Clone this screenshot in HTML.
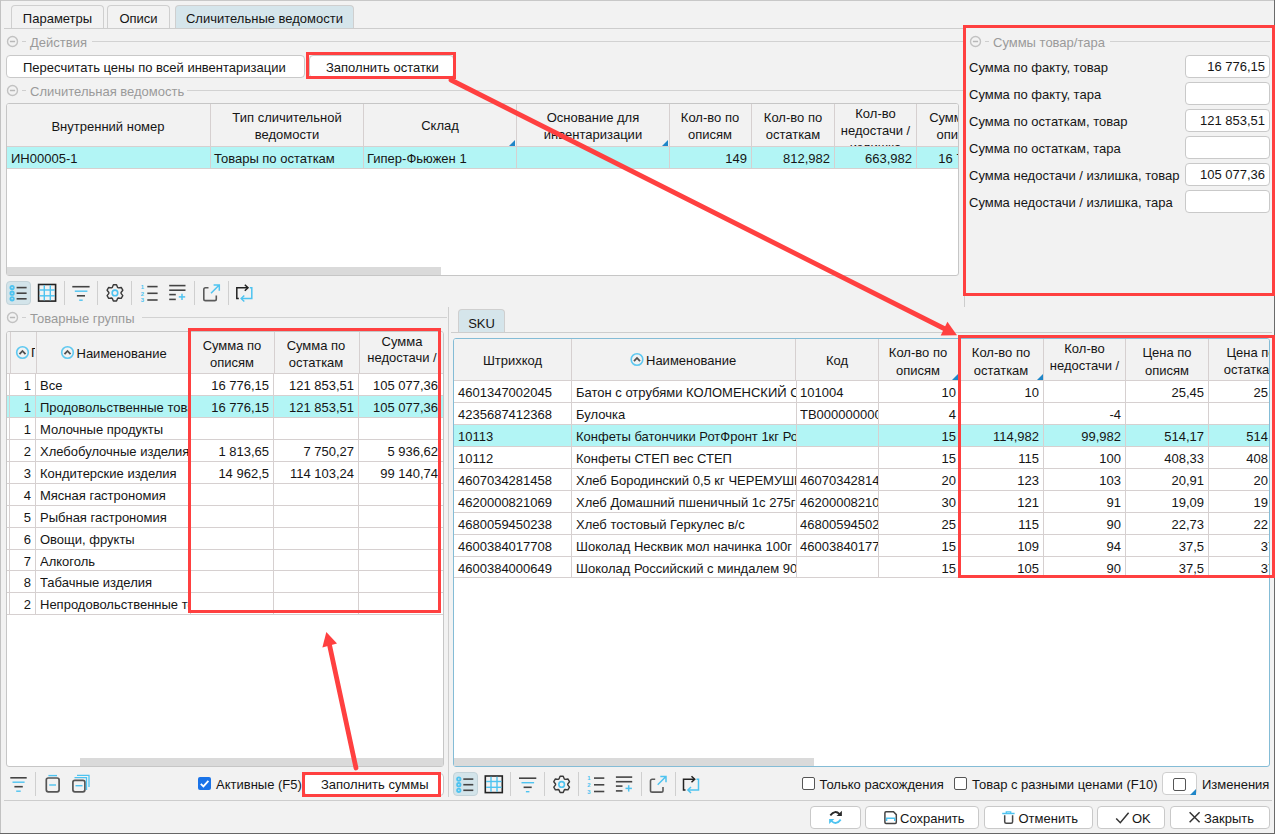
<!DOCTYPE html><html><head><meta charset="utf-8"><style>
*{box-sizing:border-box}
html,body{margin:0;padding:0}
body{width:1275px;height:834px;overflow:hidden;position:relative;background:#f2f2f2;font-family:"Liberation Sans",sans-serif;font-size:13px;color:#151515}
.a{position:absolute}
.t{position:absolute;white-space:nowrap;line-height:16px}
.c{position:absolute;white-space:nowrap;overflow:hidden;line-height:16px}
.btn{position:absolute;background:#fff;border:1px solid #c9c9c9;border-radius:4px}
.tab{position:absolute;border:1px solid #cfcfcf;border-bottom:none;border-radius:4px 4px 0 0;text-align:center;line-height:22px;padding-top:2px}
.grp{position:absolute;color:#9a9a9a;white-space:nowrap;line-height:16px}
.hl{position:absolute;height:1px;background:#cdcdcd}
.vl{position:absolute;width:1px}
.inp{position:absolute;background:#fff;border:1px solid #c9c9c9;border-radius:4px;text-align:right;padding-right:4px;line-height:22px}
.sep{position:absolute;width:1px;background:#cfcfcf}
.cb{position:absolute;width:13px;height:13px;border:1px solid #555;border-radius:2px;background:#fff}
</style></head><body><div class="a" style="left:0px;top:0px;width:1275px;height:1px;background:#c8c8c8"></div>
<div class="a" style="left:0px;top:0px;width:1px;height:834px;background:#c2c2c2"></div>
<div class="a" style="left:1274px;top:0px;width:1px;height:834px;background:#6a6a6a"></div>
<div class="a" style="left:0px;top:833px;width:1275px;height:1px;background:#666666"></div>
<div class="tab" style="left:11px;top:5px;width:93px;height:23px;background:#f2f2f2">Параметры</div>
<div class="tab" style="left:107px;top:5px;width:63px;height:23px;background:#f2f2f2">Описи</div>
<div class="tab" style="left:175px;top:5px;width:179px;height:23px;background:#d5e5eb">Сличительные ведомости</div>
<div class="a" style="left:4px;top:28px;width:960px;height:1px;background:#cdcdcd"></div>
<svg class="a" style="left:0;top:0;overflow:visible" width="1" height="1"><g transform="translate(6.5,35.5)"><circle cx="6" cy="6" r="5" fill="none" stroke="#c2c2c2" stroke-width="1.4"/><line x1="3.4" y1="6" x2="8.6" y2="6" stroke="#b8b8b8" stroke-width="1.5"/></g></svg>
<div class="a" style="left:22px;top:41px;width:4px;height:1px;background:#cfcfcf"></div>
<div class="grp" style="left:30px;top:35px">Действия</div>
<div class="a" style="left:92px;top:41px;width:871px;height:1px;background:#d2d2d2"></div>
<div class="btn" style="left:6px;top:55px;width:299px;height:23px"></div>
<div class="t" style="left:23px;top:60px;">Пересчитать цены по всей инвентаризации</div>
<div class="btn" style="left:309px;top:55px;width:145px;height:23px"></div>
<div class="t" style="left:326px;top:60px;">Заполнить остатки</div>
<svg class="a" style="left:0;top:0;overflow:visible" width="1" height="1"><g transform="translate(6.5,84.5)"><circle cx="6" cy="6" r="5" fill="none" stroke="#c2c2c2" stroke-width="1.4"/><line x1="3.4" y1="6" x2="8.6" y2="6" stroke="#b8b8b8" stroke-width="1.5"/></g></svg>
<div class="a" style="left:22px;top:90px;width:4px;height:1px;background:#cfcfcf"></div>
<div class="grp" style="left:30px;top:84px">Сличительная ведомость</div>
<div class="a" style="left:187px;top:90px;width:776px;height:1px;background:#d2d2d2"></div>
<div class="a" style="left:6px;top:103px;width:953px;height:173px;border:1px solid #c6c6c6;border-radius:3px;background:#fff"></div>
<div class="a" style="left:7px;top:104px;width:951px;height:42px;background:#f2f2f2;border-radius:2px 2px 0 0"></div>
<div class="a" style="left:7px;top:147px;width:951px;height:21px;background:#b2f5f5"></div>
<div class="a" style="left:7px;top:146px;width:951px;height:1px;background:#d6d0d0"></div>
<div class="a" style="left:7px;top:168px;width:951px;height:1px;background:#d6d0d0"></div>
<div class="a" style="left:210px;top:104px;width:1px;height:64px;background:#d6d0d0"></div>
<div class="a" style="left:363px;top:104px;width:1px;height:64px;background:#d6d0d0"></div>
<div class="a" style="left:516px;top:104px;width:1px;height:64px;background:#d6d0d0"></div>
<div class="a" style="left:669px;top:104px;width:1px;height:64px;background:#d6d0d0"></div>
<div class="a" style="left:751px;top:104px;width:1px;height:64px;background:#d6d0d0"></div>
<div class="a" style="left:834px;top:104px;width:1px;height:64px;background:#d6d0d0"></div>
<div class="a" style="left:916px;top:104px;width:1px;height:64px;background:#d6d0d0"></div>
<div class="a" style="left:7px;top:267px;width:434px;height:8px;background:#dadada"></div>
<div class="t" style="left:-42px;width:300px;text-align:center;top:119px;">Внутренний номер</div>
<div class="t" style="left:137px;width:300px;text-align:center;top:110px;">Тип сличительной</div>
<div class="t" style="left:137px;width:300px;text-align:center;top:127px;">ведомости</div>
<div class="t" style="left:290px;width:300px;text-align:center;top:118px;">Склад</div>
<svg class="a" style="left:509px;top:140px" width="6" height="6"><polygon points="6,0 6,6 0,6" fill="#1f86c8"/></svg>
<div class="t" style="left:443px;width:300px;text-align:center;top:110px;">Основание для</div>
<div class="t" style="left:443px;width:300px;text-align:center;top:127px;">инвентаризации</div>
<svg class="a" style="left:662px;top:140px" width="6" height="6"><polygon points="6,0 6,6 0,6" fill="#1f86c8"/></svg>
<div class="t" style="left:560px;width:300px;text-align:center;top:110px;">Кол-во по</div>
<div class="t" style="left:560px;width:300px;text-align:center;top:127px;">описям</div>
<div class="t" style="left:643px;width:300px;text-align:center;top:110px;">Кол-во по</div>
<div class="t" style="left:643px;width:300px;text-align:center;top:127px;">остаткам</div>
<div class="c" style="left:835px;top:104px;width:81px;height:42px"><div style="position:absolute;left:0;width:81px;text-align:center;top:1px;line-height:17px">Кол-во<br>недостачи /<br>излишка</div></div>
<div class="c" style="left:917px;top:104px;width:41px;height:42px"><div style="position:absolute;left:0;width:83px;text-align:center;top:5px;line-height:17px">Сумма по<br>описям</div></div>
<div class="t" style="left:11px;top:150.5px;">ИН00005-1</div>
<div class="t" style="left:214px;top:150.5px;">Товары по остаткам</div>
<div class="t" style="left:367px;top:150.5px;">Гипер-Фьюжен 1</div>
<div class="t" style="right:528px;top:150.5px;">149</div>
<div class="t" style="right:445px;top:150.5px;">812,982</div>
<div class="t" style="right:363px;top:150.5px;">663,982</div>
<div class="c" style="left:917px;top:147px;width:41px;height:21px"><div style="position:absolute;right:-38px;top:3.5px">16 776,15</div></div>
<div class="a" style="left:964px;top:28px;width:1px;height:279px;background:#cdcdcd"></div>
<svg class="a" style="left:0;top:0;overflow:visible" width="1" height="1"><g transform="translate(969.5,35.5)"><circle cx="6" cy="6" r="5" fill="none" stroke="#c2c2c2" stroke-width="1.4"/><line x1="3.4" y1="6" x2="8.6" y2="6" stroke="#b8b8b8" stroke-width="1.5"/></g></svg>
<div class="a" style="left:985px;top:41px;width:4px;height:1px;background:#cfcfcf"></div>
<div class="grp" style="left:993px;top:35px">Суммы товар/тара</div>
<div class="a" style="left:1110px;top:41px;width:160px;height:1px;background:#d2d2d2"></div>
<div class="t" style="left:969px;top:59.5px;">Сумма по факту, товар</div>
<div class="inp" style="left:1185px;top:55px;width:85px;height:23px">16 776,15</div>
<div class="t" style="left:969px;top:86.5px;">Сумма по факту, тара</div>
<div class="inp" style="left:1185px;top:82px;width:85px;height:23px"></div>
<div class="t" style="left:969px;top:113.5px;">Сумма по остаткам, товар</div>
<div class="inp" style="left:1185px;top:109px;width:85px;height:23px">121 853,51</div>
<div class="t" style="left:969px;top:140.5px;">Сумма по остаткам, тара</div>
<div class="inp" style="left:1185px;top:136px;width:85px;height:23px"></div>
<div class="t" style="left:969px;top:167.5px;">Сумма недостачи / излишка, товар</div>
<div class="inp" style="left:1185px;top:163px;width:85px;height:23px">105 077,36</div>
<div class="t" style="left:969px;top:194.5px;">Сумма недостачи / излишка, тара</div>
<div class="inp" style="left:1185px;top:190px;width:85px;height:23px"></div>
<div class="a" style="left:6px;top:281px;width:25px;height:24px;background:#d3e4ea;border:1px solid #c3d3d9;border-radius:4px"></div>
<svg class="a" style="left:0;top:0;overflow:visible" width="1" height="1"><g transform="translate(0,0)"><circle cx="12.1" cy="287.6" r="1.7" fill="none" stroke="#4ec3f0" stroke-width="1.8"/><line x1="16.6" y1="287.6" x2="26.6" y2="287.6" stroke="#444" stroke-width="1.6"/><circle cx="12.1" cy="293.2" r="1.7" fill="none" stroke="#4ec3f0" stroke-width="1.8"/><line x1="16.6" y1="293.2" x2="26.6" y2="293.2" stroke="#444" stroke-width="1.6"/><circle cx="12.1" cy="298.8" r="1.7" fill="none" stroke="#4ec3f0" stroke-width="1.8"/><line x1="16.6" y1="298.8" x2="26.6" y2="298.8" stroke="#444" stroke-width="1.6"/><rect x="38.6" y="284.5" width="17" height="16.6" fill="none" stroke="#222" stroke-width="1.6"/><line x1="44.3" y1="285.3" x2="44.3" y2="300.3" stroke="#4ec3f0" stroke-width="1.4"/><line x1="50.3" y1="285.3" x2="50.3" y2="300.3" stroke="#4ec3f0" stroke-width="1.4"/><line x1="39.4" y1="290" x2="54.8" y2="290" stroke="#4ec3f0" stroke-width="1.4"/><line x1="39.4" y1="295.8" x2="54.8" y2="295.8" stroke="#4ec3f0" stroke-width="1.4"/></g></svg>
<div class="a" style="left:64px;top:281px;width:1px;height:24px;background:#cfcfcf"></div>
<div class="a" style="left:97px;top:281px;width:1px;height:24px;background:#cfcfcf"></div>
<div class="a" style="left:131px;top:281px;width:1px;height:24px;background:#cfcfcf"></div>
<div class="a" style="left:194px;top:281px;width:1px;height:24px;background:#cfcfcf"></div>
<div class="a" style="left:228px;top:281px;width:1px;height:24px;background:#cfcfcf"></div>
<svg class="a" style="left:0;top:0;overflow:visible" width="1" height="1"><g transform="translate(0,0)"><line x1="72.3" y1="286.7" x2="89.6" y2="286.7" stroke="#444" stroke-width="1.6"/><line x1="74.8" y1="291.2" x2="87.4" y2="291.2" stroke="#4ec3f0" stroke-width="1.4"/><line x1="76.9" y1="295.8" x2="85" y2="295.8" stroke="#444" stroke-width="1.6"/><line x1="79.2" y1="300.2" x2="82.7" y2="300.2" stroke="#4ec3f0" stroke-width="1.4"/><polygon points="113.37,284.75 116.53,284.75 117.62,287.42 118.36,287.84 121.21,287.45 122.80,290.20 121.04,292.47 121.04,293.33 122.80,295.60 121.21,298.35 118.36,297.96 117.62,298.38 116.53,301.05 113.37,301.05 112.28,298.38 111.54,297.96 108.69,298.35 107.10,295.60 108.86,293.33 108.86,292.47 107.10,290.20 108.69,287.45 111.54,287.84 112.28,287.42" fill="none" stroke="#3a3a3a" stroke-width="1.4" stroke-linejoin="round"/><circle cx="114.95" cy="292.9" r="2.8" fill="none" stroke="#4ec3f0" stroke-width="1.6"/><text x="142.3" y="288.8" font-size="6" font-family="Liberation Sans" font-weight="bold" fill="#4ec3f0" text-anchor="middle">1</text><line x1="147.3" y1="286.6" x2="157.6" y2="286.6" stroke="#444" stroke-width="1.6"/><text x="142.3" y="295.5" font-size="6" font-family="Liberation Sans" font-weight="bold" fill="#4ec3f0" text-anchor="middle">2</text><line x1="147.3" y1="293.3" x2="157.6" y2="293.3" stroke="#444" stroke-width="1.6"/><text x="142.3" y="302.2" font-size="6" font-family="Liberation Sans" font-weight="bold" fill="#4ec3f0" text-anchor="middle">3</text><line x1="147.3" y1="300.0" x2="157.6" y2="300.0" stroke="#444" stroke-width="1.6"/><line x1="169.2" y1="285.6" x2="185.5" y2="285.6" stroke="#444" stroke-width="1.6"/><line x1="169.2" y1="290.2" x2="185.5" y2="290.2" stroke="#444" stroke-width="1.6"/><line x1="169.2" y1="294.6" x2="175.8" y2="294.6" stroke="#444" stroke-width="1.6"/><line x1="169.2" y1="299.4" x2="175.8" y2="299.4" stroke="#444" stroke-width="1.6"/><line x1="178.8" y1="296.9" x2="185.2" y2="296.9" stroke="#4ec3f0" stroke-width="1.5"/><line x1="182" y1="293.7" x2="182" y2="300.1" stroke="#4ec3f0" stroke-width="1.5"/><path d="M208.5 287.8 H205.5 Q203.8 287.8 203.8 289.5 V298.9 Q203.8 300.6 205.5 300.6 H214.6 Q216.3 300.6 216.3 298.9 V295.5" fill="none" stroke="#5a5a5a" stroke-width="1.6"/><path d="M211 293.3 L219 285.3 M213.6 285.1 H219.3 V290.8" fill="none" stroke="#4ec3f0" stroke-width="1.5"/><path d="M238.8 298.5 H236.8 V287.8 H247.5" fill="none" stroke="#222" stroke-width="1.5"/><path d="M244.8 284.8 L248 287.8 L244.8 290.8" fill="none" stroke="#222" stroke-width="1.5"/><path d="M249.8 287.8 H251.8 V298.5 H241.5" fill="none" stroke="#4ec3f0" stroke-width="1.5"/><path d="M244.3 295.5 L241.2 298.5 L244.3 301.5" fill="none" stroke="#4ec3f0" stroke-width="1.5"/></g></svg>
<svg class="a" style="left:0;top:0;overflow:visible" width="1" height="1"><g transform="translate(6.5,311.5)"><circle cx="6" cy="6" r="5" fill="none" stroke="#c2c2c2" stroke-width="1.4"/><line x1="3.4" y1="6" x2="8.6" y2="6" stroke="#b8b8b8" stroke-width="1.5"/></g></svg>
<div class="a" style="left:22px;top:317px;width:4px;height:1px;background:#cfcfcf"></div>
<div class="grp" style="left:30px;top:311px">Товарные группы</div>
<div class="a" style="left:142px;top:317px;width:305px;height:1px;background:#d2d2d2"></div>
<div class="a" style="left:6px;top:331px;width:438px;height:436px;border:1px solid #c6c6c6;border-radius:3px;background:#fff"></div>
<div class="a" style="left:7px;top:332px;width:436px;height:41px;background:#f2f2f2;border-radius:2px 2px 0 0"></div>
<div class="a" style="left:7px;top:373px;width:436px;height:1px;background:#d6d0d0"></div>
<div class="a" style="left:7px;top:395.00px;width:436px;height:1px;background:#d6d0d0"></div>
<div class="t" style="right:1244px;top:377.5px;">1</div>
<div class="c" style="left:40px;top:377.50px;width:150px;height:16px">Все</div>
<div class="t" style="right:1006px;top:377.5px;">16 776,15</div>
<div class="t" style="right:921px;top:377.5px;">121 853,51</div>
<div class="c" style="left:360px;top:377.50px;width:82px;height:16px"><div style="position:absolute;right:4px">105 077,36</div></div>
<div class="a" style="left:7px;top:396px;width:436px;height:21px;background:#b2f5f5"></div>
<div class="a" style="left:7px;top:417.00px;width:436px;height:1px;background:#d6d0d0"></div>
<div class="t" style="right:1244px;top:399.5px;">1</div>
<div class="c" style="left:40px;top:399.50px;width:150px;height:16px">Продовольственные товары</div>
<div class="t" style="right:1006px;top:399.5px;">16 776,15</div>
<div class="t" style="right:921px;top:399.5px;">121 853,51</div>
<div class="c" style="left:360px;top:399.50px;width:82px;height:16px"><div style="position:absolute;right:4px">105 077,36</div></div>
<div class="a" style="left:7px;top:439.00px;width:436px;height:1px;background:#d6d0d0"></div>
<div class="t" style="right:1244px;top:421.5px;">1</div>
<div class="c" style="left:40px;top:421.50px;width:150px;height:16px">Молочные продукты</div>
<div class="t" style="right:1006px;top:421.5px;"></div>
<div class="t" style="right:921px;top:421.5px;"></div>
<div class="c" style="left:360px;top:421.50px;width:82px;height:16px"><div style="position:absolute;right:4px"></div></div>
<div class="a" style="left:7px;top:461.00px;width:436px;height:1px;background:#d6d0d0"></div>
<div class="t" style="right:1244px;top:443.5px;">2</div>
<div class="c" style="left:40px;top:443.50px;width:150px;height:16px">Хлебобулочные изделия</div>
<div class="t" style="right:1006px;top:443.5px;">1 813,65</div>
<div class="t" style="right:921px;top:443.5px;">7 750,27</div>
<div class="c" style="left:360px;top:443.50px;width:82px;height:16px"><div style="position:absolute;right:4px">5 936,62</div></div>
<div class="a" style="left:7px;top:483.00px;width:436px;height:1px;background:#d6d0d0"></div>
<div class="t" style="right:1244px;top:465.5px;">3</div>
<div class="c" style="left:40px;top:465.50px;width:150px;height:16px">Кондитерские изделия</div>
<div class="t" style="right:1006px;top:465.5px;">14 962,5</div>
<div class="t" style="right:921px;top:465.5px;">114 103,24</div>
<div class="c" style="left:360px;top:465.50px;width:82px;height:16px"><div style="position:absolute;right:4px">99 140,74</div></div>
<div class="a" style="left:7px;top:505.00px;width:436px;height:1px;background:#d6d0d0"></div>
<div class="t" style="right:1244px;top:487.5px;">4</div>
<div class="c" style="left:40px;top:487.50px;width:150px;height:16px">Мясная гастрономия</div>
<div class="t" style="right:1006px;top:487.5px;"></div>
<div class="t" style="right:921px;top:487.5px;"></div>
<div class="c" style="left:360px;top:487.50px;width:82px;height:16px"><div style="position:absolute;right:4px"></div></div>
<div class="a" style="left:7px;top:527.00px;width:436px;height:1px;background:#d6d0d0"></div>
<div class="t" style="right:1244px;top:509.5px;">5</div>
<div class="c" style="left:40px;top:509.50px;width:150px;height:16px">Рыбная гастрономия</div>
<div class="t" style="right:1006px;top:509.5px;"></div>
<div class="t" style="right:921px;top:509.5px;"></div>
<div class="c" style="left:360px;top:509.50px;width:82px;height:16px"><div style="position:absolute;right:4px"></div></div>
<div class="a" style="left:7px;top:549.00px;width:436px;height:1px;background:#d6d0d0"></div>
<div class="t" style="right:1244px;top:531.5px;">6</div>
<div class="c" style="left:40px;top:531.50px;width:150px;height:16px">Овощи, фрукты</div>
<div class="t" style="right:1006px;top:531.5px;"></div>
<div class="t" style="right:921px;top:531.5px;"></div>
<div class="c" style="left:360px;top:531.50px;width:82px;height:16px"><div style="position:absolute;right:4px"></div></div>
<div class="a" style="left:7px;top:570.00px;width:436px;height:1px;background:#d6d0d0"></div>
<div class="t" style="right:1244px;top:553.5px;">7</div>
<div class="c" style="left:40px;top:553.50px;width:150px;height:16px">Алкоголь</div>
<div class="t" style="right:1006px;top:553.5px;"></div>
<div class="t" style="right:921px;top:553.5px;"></div>
<div class="c" style="left:360px;top:553.50px;width:82px;height:16px"><div style="position:absolute;right:4px"></div></div>
<div class="a" style="left:7px;top:592.00px;width:436px;height:1px;background:#d6d0d0"></div>
<div class="t" style="right:1244px;top:574.5px;">8</div>
<div class="c" style="left:40px;top:574.50px;width:150px;height:16px">Табачные изделия</div>
<div class="t" style="right:1006px;top:574.5px;"></div>
<div class="t" style="right:921px;top:574.5px;"></div>
<div class="c" style="left:360px;top:574.50px;width:82px;height:16px"><div style="position:absolute;right:4px"></div></div>
<div class="a" style="left:7px;top:614.00px;width:436px;height:1px;background:#d6d0d0"></div>
<div class="t" style="right:1244px;top:596.5px;">2</div>
<div class="c" style="left:40px;top:596.50px;width:150px;height:16px">Непродовольственные товары</div>
<div class="t" style="right:1006px;top:596.5px;"></div>
<div class="t" style="right:921px;top:596.5px;"></div>
<div class="c" style="left:360px;top:596.50px;width:82px;height:16px"><div style="position:absolute;right:4px"></div></div>
<div class="a" style="left:10px;top:332px;width:1px;height:41px;background:#d6d0d0"></div>
<div class="a" style="left:36px;top:332px;width:1px;height:41px;background:#d6d0d0"></div>
<div class="a" style="left:190px;top:332px;width:1px;height:41px;background:#d6d0d0"></div>
<div class="a" style="left:274px;top:332px;width:1px;height:41px;background:#d6d0d0"></div>
<div class="a" style="left:359px;top:332px;width:1px;height:41px;background:#d6d0d0"></div>
<div class="a" style="left:9px;top:373px;width:1px;height:241.00px;background:#d6d0d0"></div>
<div class="a" style="left:35px;top:373px;width:1px;height:241.00px;background:#d6d0d0"></div>
<div class="a" style="left:190px;top:373px;width:1px;height:241.00px;background:#d6d0d0"></div>
<div class="a" style="left:273px;top:373px;width:1px;height:241.00px;background:#d6d0d0"></div>
<div class="a" style="left:358px;top:373px;width:1px;height:241.00px;background:#d6d0d0"></div>
<svg class="a" style="left:0;top:0;overflow:visible" width="1" height="1"><g transform="translate(15.5,345.5)"><circle cx="7" cy="7" r="5.8" fill="none" stroke="#5ec8f0" stroke-width="1.6"/><path d="M4 8.7 L7 5.5 L10 8.7" fill="none" stroke="#505050" stroke-width="1.8"/></g></svg>
<div class="c" style="left:31px;top:345px;width:4px;height:16px">Г</div>
<svg class="a" style="left:0;top:0;overflow:visible" width="1" height="1"><g transform="translate(60.5,345.5)"><circle cx="7" cy="7" r="5.8" fill="none" stroke="#5ec8f0" stroke-width="1.6"/><path d="M4 8.7 L7 5.5 L10 8.7" fill="none" stroke="#505050" stroke-width="1.8"/></g></svg>
<div class="t" style="left:76.5px;top:345.5px;">Наименование</div>
<div class="t" style="left:82px;width:300px;text-align:center;top:338px;">Сумма по</div>
<div class="t" style="left:82px;width:300px;text-align:center;top:355px;">описям</div>
<div class="t" style="left:166px;width:300px;text-align:center;top:338px;">Сумма по</div>
<div class="t" style="left:166px;width:300px;text-align:center;top:355px;">остаткам</div>
<div class="c" style="left:360px;top:332px;width:82px;height:38px"><div style="position:absolute;left:0;width:84px;text-align:center;top:2px;line-height:16.4px">Сумма<br>недостачи /<br>излишка</div></div>
<div class="a" style="left:80px;top:758px;width:363px;height:8px;background:#dadada"></div>
<div class="a" style="left:448px;top:307px;width:1px;height:490px;background:#cfcfcf"></div>
<div class="tab" style="left:458px;top:309px;width:47px;height:24px;background:#d5e5eb;line-height:24px">SKU</div>
<div class="a" style="left:451px;top:332px;width:821px;height:1px;background:#cdcdcd"></div>
<div class="a" style="left:453px;top:338px;width:817px;height:429px;border:1px solid #84bcd6;border-radius:3px;background:#fff"></div>
<div class="a" style="left:454px;top:339px;width:815px;height:41px;background:#f2f2f2;border-radius:2px 2px 0 0"></div>
<div class="a" style="left:454px;top:380px;width:815px;height:1px;background:#d6d0d0"></div>
<div class="a" style="left:454px;top:402.00px;width:815px;height:1px;background:#d6d0d0"></div>
<div class="t" style="left:458px;top:384.5px;">4601347002045</div>
<div class="c" style="left:576px;top:384.50px;width:220px;height:16px">Батон с отрубями КОЛОМЕНСКИЙ С</div>
<div class="c" style="left:800px;top:384.50px;width:78px;height:16px">101004</div>
<div class="t" style="right:319px;top:384.5px;">10</div>
<div class="t" style="right:236px;top:384.5px;">10</div>
<div class="t" style="right:154px;top:384.5px;"></div>
<div class="t" style="right:71px;top:384.5px;">25,45</div>
<div class="c" style="left:1209px;top:384.50px;width:60px;height:16px"><div style="position:absolute;right:-17px">25,45</div></div>
<div class="a" style="left:454px;top:424.00px;width:815px;height:1px;background:#d6d0d0"></div>
<div class="t" style="left:458px;top:406.5px;">4235687412368</div>
<div class="c" style="left:576px;top:406.50px;width:220px;height:16px">Булочка</div>
<div class="c" style="left:800px;top:406.50px;width:78px;height:16px">ТВ000000000</div>
<div class="t" style="right:319px;top:406.5px;">4</div>
<div class="t" style="right:236px;top:406.5px;"></div>
<div class="t" style="right:154px;top:406.5px;">-4</div>
<div class="t" style="right:71px;top:406.5px;"></div>
<div class="c" style="left:1209px;top:406.50px;width:60px;height:16px"><div style="position:absolute;right:-17px"></div></div>
<div class="a" style="left:454px;top:425px;width:815px;height:21px;background:#b2f5f5"></div>
<div class="a" style="left:454px;top:446.00px;width:815px;height:1px;background:#d6d0d0"></div>
<div class="t" style="left:458px;top:428.5px;">10113</div>
<div class="c" style="left:576px;top:428.50px;width:220px;height:16px">Конфеты батончики РотФронт 1кг РотФронт</div>
<div class="c" style="left:800px;top:428.50px;width:78px;height:16px"></div>
<div class="t" style="right:319px;top:428.5px;">15</div>
<div class="t" style="right:236px;top:428.5px;">114,982</div>
<div class="t" style="right:154px;top:428.5px;">99,982</div>
<div class="t" style="right:71px;top:428.5px;">514,17</div>
<div class="c" style="left:1209px;top:428.50px;width:60px;height:16px"><div style="position:absolute;right:-17px">514,17</div></div>
<div class="a" style="left:454px;top:468.00px;width:815px;height:1px;background:#d6d0d0"></div>
<div class="t" style="left:458px;top:450.5px;">10112</div>
<div class="c" style="left:576px;top:450.50px;width:220px;height:16px">Конфеты СТЕП вес СТЕП</div>
<div class="c" style="left:800px;top:450.50px;width:78px;height:16px"></div>
<div class="t" style="right:319px;top:450.5px;">15</div>
<div class="t" style="right:236px;top:450.5px;">115</div>
<div class="t" style="right:154px;top:450.5px;">100</div>
<div class="t" style="right:71px;top:450.5px;">408,33</div>
<div class="c" style="left:1209px;top:450.50px;width:60px;height:16px"><div style="position:absolute;right:-17px">408,33</div></div>
<div class="a" style="left:454px;top:490.00px;width:815px;height:1px;background:#d6d0d0"></div>
<div class="t" style="left:458px;top:472.5px;">4607034281458</div>
<div class="c" style="left:576px;top:472.50px;width:220px;height:16px">Хлеб Бородинский 0,5 кг ЧЕРЕМУШКИ</div>
<div class="c" style="left:800px;top:472.50px;width:78px;height:16px">46070342814</div>
<div class="t" style="right:319px;top:472.5px;">20</div>
<div class="t" style="right:236px;top:472.5px;">123</div>
<div class="t" style="right:154px;top:472.5px;">103</div>
<div class="t" style="right:71px;top:472.5px;">20,91</div>
<div class="c" style="left:1209px;top:472.50px;width:60px;height:16px"><div style="position:absolute;right:-17px">20,91</div></div>
<div class="a" style="left:454px;top:512.00px;width:815px;height:1px;background:#d6d0d0"></div>
<div class="t" style="left:458px;top:494.5px;">4620000821069</div>
<div class="c" style="left:576px;top:494.50px;width:220px;height:16px">Хлеб Домашний пшеничный 1с 275г</div>
<div class="c" style="left:800px;top:494.50px;width:78px;height:16px">46200008210</div>
<div class="t" style="right:319px;top:494.5px;">30</div>
<div class="t" style="right:236px;top:494.5px;">121</div>
<div class="t" style="right:154px;top:494.5px;">91</div>
<div class="t" style="right:71px;top:494.5px;">19,09</div>
<div class="c" style="left:1209px;top:494.50px;width:60px;height:16px"><div style="position:absolute;right:-17px">19,09</div></div>
<div class="a" style="left:454px;top:534.00px;width:815px;height:1px;background:#d6d0d0"></div>
<div class="t" style="left:458px;top:516.5px;">4680059450238</div>
<div class="c" style="left:576px;top:516.50px;width:220px;height:16px">Хлеб тостовый Геркулес в/с</div>
<div class="c" style="left:800px;top:516.50px;width:78px;height:16px">46800594502</div>
<div class="t" style="right:319px;top:516.5px;">25</div>
<div class="t" style="right:236px;top:516.5px;">115</div>
<div class="t" style="right:154px;top:516.5px;">90</div>
<div class="t" style="right:71px;top:516.5px;">22,73</div>
<div class="c" style="left:1209px;top:516.50px;width:60px;height:16px"><div style="position:absolute;right:-17px">22,73</div></div>
<div class="a" style="left:454px;top:556.00px;width:815px;height:1px;background:#d6d0d0"></div>
<div class="t" style="left:458px;top:538.5px;">4600384017708</div>
<div class="c" style="left:576px;top:538.50px;width:220px;height:16px">Шоколад Несквик мол начинка 100г</div>
<div class="c" style="left:800px;top:538.50px;width:78px;height:16px">46003840177</div>
<div class="t" style="right:319px;top:538.5px;">15</div>
<div class="t" style="right:236px;top:538.5px;">109</div>
<div class="t" style="right:154px;top:538.5px;">94</div>
<div class="t" style="right:71px;top:538.5px;">37,5</div>
<div class="c" style="left:1209px;top:538.50px;width:60px;height:16px"><div style="position:absolute;right:-17px">37,5</div></div>
<div class="a" style="left:454px;top:577.00px;width:815px;height:1px;background:#d6d0d0"></div>
<div class="t" style="left:458px;top:560.5px;">4600384000649</div>
<div class="c" style="left:576px;top:560.50px;width:220px;height:16px">Шоколад Российский с миндалем 90г</div>
<div class="c" style="left:800px;top:560.50px;width:78px;height:16px"></div>
<div class="t" style="right:319px;top:560.5px;">15</div>
<div class="t" style="right:236px;top:560.5px;">105</div>
<div class="t" style="right:154px;top:560.5px;">90</div>
<div class="t" style="right:71px;top:560.5px;">37,5</div>
<div class="c" style="left:1209px;top:560.50px;width:60px;height:16px"><div style="position:absolute;right:-17px">37,5</div></div>
<div class="a" style="left:571px;top:339px;width:1px;height:41px;background:#d6d0d0"></div>
<div class="a" style="left:795px;top:339px;width:1px;height:41px;background:#d6d0d0"></div>
<div class="a" style="left:878px;top:339px;width:1px;height:41px;background:#d6d0d0"></div>
<div class="a" style="left:958px;top:339px;width:1px;height:41px;background:#d6d0d0"></div>
<div class="a" style="left:1043px;top:339px;width:1px;height:41px;background:#d6d0d0"></div>
<div class="a" style="left:1125px;top:339px;width:1px;height:41px;background:#d6d0d0"></div>
<div class="a" style="left:1208px;top:339px;width:1px;height:41px;background:#d6d0d0"></div>
<div class="a" style="left:571px;top:380px;width:1px;height:197.00px;background:#d6d0d0"></div>
<div class="a" style="left:796px;top:380px;width:1px;height:197.00px;background:#d6d0d0"></div>
<div class="a" style="left:878px;top:380px;width:1px;height:197.00px;background:#d6d0d0"></div>
<div class="a" style="left:958px;top:380px;width:1px;height:197.00px;background:#d6d0d0"></div>
<div class="a" style="left:1043px;top:380px;width:1px;height:197.00px;background:#d6d0d0"></div>
<div class="a" style="left:1125px;top:380px;width:1px;height:197.00px;background:#d6d0d0"></div>
<div class="a" style="left:1208px;top:380px;width:1px;height:197.00px;background:#d6d0d0"></div>
<div class="t" style="left:362.5px;width:300px;text-align:center;top:353px;">Штрихкод</div>
<svg class="a" style="left:0;top:0;overflow:visible" width="1" height="1"><g transform="translate(630,352.5)"><circle cx="7" cy="7" r="5.8" fill="none" stroke="#5ec8f0" stroke-width="1.6"/><path d="M4 8.7 L7 5.5 L10 8.7" fill="none" stroke="#505050" stroke-width="1.8"/></g></svg>
<div class="t" style="left:646px;top:353px;">Наименование</div>
<div class="t" style="left:687px;width:300px;text-align:center;top:353px;">Код</div>
<div class="t" style="left:768px;width:300px;text-align:center;top:345px;">Кол-во по</div>
<div class="t" style="left:768px;width:300px;text-align:center;top:362.5px;">описям</div>
<svg class="a" style="left:952px;top:374px" width="6" height="6"><polygon points="6,0 6,6 0,6" fill="#1f86c8"/></svg>
<div class="t" style="left:851px;width:300px;text-align:center;top:345px;">Кол-во по</div>
<div class="t" style="left:851px;width:300px;text-align:center;top:362.5px;">остаткам</div>
<svg class="a" style="left:1037px;top:374px" width="6" height="6"><polygon points="6,0 6,6 0,6" fill="#1f86c8"/></svg>
<div class="c" style="left:1044px;top:339px;width:81px;height:39px"><div style="position:absolute;left:0;width:81px;text-align:center;top:1px;line-height:17px">Кол-во<br>недостачи /<br>излишка</div></div>
<div class="t" style="left:1017px;width:300px;text-align:center;top:345px;">Цена по</div>
<div class="t" style="left:1017px;width:300px;text-align:center;top:362.5px;">описям</div>
<div class="c" style="left:1209px;top:339px;width:60px;height:42px"><div style="position:absolute;left:0;width:84px;text-align:center;top:5px;line-height:17px">Цена по<br>остаткам</div></div>
<div class="a" style="left:454px;top:758px;width:360px;height:8px;background:#dadada"></div>
<svg class="a" style="left:0;top:0;overflow:visible" width="1" height="1"><line x1="10.3" y1="777.8" x2="26.7" y2="777.8" stroke="#444" stroke-width="1.6"/><line x1="12.5" y1="782.2" x2="24.6" y2="782.2" stroke="#4ec3f0" stroke-width="1.4"/><line x1="14.4" y1="786.7" x2="22.8" y2="786.7" stroke="#444" stroke-width="1.6"/><line x1="16.2" y1="791.2" x2="20.7" y2="791.2" stroke="#4ec3f0" stroke-width="1.4"/><rect x="46.3" y="778" width="12.8" height="13.8" rx="2" fill="none" stroke="#555" stroke-width="1.7"/><line x1="48.4" y1="775.6" x2="57" y2="775.6" stroke="#4ec3f0" stroke-width="1.4"/><line x1="49.2" y1="785" x2="56" y2="785" stroke="#4ec3f0" stroke-width="1.4"/><rect x="72.9" y="780.3" width="12" height="11.5" rx="2" fill="none" stroke="#555" stroke-width="1.7"/><path d="M74.5 777.6 H86.5 V790" fill="none" stroke="#4ec3f0" stroke-width="1.3"/><path d="M77 775.3 H89 V787" fill="none" stroke="#4ec3f0" stroke-width="1.3"/><line x1="75.5" y1="785.7" x2="82.5" y2="785.7" stroke="#4ec3f0" stroke-width="1.4"/></svg>
<div class="a" style="left:35px;top:772px;width:1px;height:24px;background:#cfcfcf"></div>
<svg class="a" style="left:198px;top:777px" width="14" height="14" viewBox="0 0 14 14"><rect x="0" y="0" width="13" height="13" rx="2" fill="#1a73e8"/><path d="M2.8 6.8 L5.4 9.4 L10.4 3.8" fill="none" stroke="#fff" stroke-width="1.8"/></svg>
<div class="t" style="left:216px;top:777px;">Активные (F5)</div>
<div class="btn" style="left:304px;top:773px;width:140px;height:23px"></div>
<div class="t" style="left:321px;top:777px;">Заполнить суммы</div>
<div class="a" style="left:4px;top:800px;width:1268px;height:1px;background:#cdcdcd"></div>
<div class="a" style="left:453px;top:772px;width:25px;height:24px;background:#d3e4ea;border:1px solid #c3d3d9;border-radius:4px"></div>
<svg class="a" style="left:0;top:0;overflow:visible" width="1" height="1"><g transform="translate(446.7,491.5)"><circle cx="12.1" cy="287.6" r="1.7" fill="none" stroke="#4ec3f0" stroke-width="1.8"/><line x1="16.6" y1="287.6" x2="26.6" y2="287.6" stroke="#444" stroke-width="1.6"/><circle cx="12.1" cy="293.2" r="1.7" fill="none" stroke="#4ec3f0" stroke-width="1.8"/><line x1="16.6" y1="293.2" x2="26.6" y2="293.2" stroke="#444" stroke-width="1.6"/><circle cx="12.1" cy="298.8" r="1.7" fill="none" stroke="#4ec3f0" stroke-width="1.8"/><line x1="16.6" y1="298.8" x2="26.6" y2="298.8" stroke="#444" stroke-width="1.6"/><rect x="38.6" y="284.5" width="17" height="16.6" fill="none" stroke="#222" stroke-width="1.6"/><line x1="44.3" y1="285.3" x2="44.3" y2="300.3" stroke="#4ec3f0" stroke-width="1.4"/><line x1="50.3" y1="285.3" x2="50.3" y2="300.3" stroke="#4ec3f0" stroke-width="1.4"/><line x1="39.4" y1="290" x2="54.8" y2="290" stroke="#4ec3f0" stroke-width="1.4"/><line x1="39.4" y1="295.8" x2="54.8" y2="295.8" stroke="#4ec3f0" stroke-width="1.4"/></g></svg>
<div class="a" style="left:510px;top:772px;width:1px;height:24px;background:#cfcfcf"></div>
<div class="a" style="left:544px;top:772px;width:1px;height:24px;background:#cfcfcf"></div>
<div class="a" style="left:578px;top:772px;width:1px;height:24px;background:#cfcfcf"></div>
<div class="a" style="left:641px;top:772px;width:1px;height:24px;background:#cfcfcf"></div>
<div class="a" style="left:675px;top:772px;width:1px;height:24px;background:#cfcfcf"></div>
<svg class="a" style="left:0;top:0;overflow:visible" width="1" height="1"><g transform="translate(446.7,491.5)"><line x1="72.3" y1="286.7" x2="89.6" y2="286.7" stroke="#444" stroke-width="1.6"/><line x1="74.8" y1="291.2" x2="87.4" y2="291.2" stroke="#4ec3f0" stroke-width="1.4"/><line x1="76.9" y1="295.8" x2="85" y2="295.8" stroke="#444" stroke-width="1.6"/><line x1="79.2" y1="300.2" x2="82.7" y2="300.2" stroke="#4ec3f0" stroke-width="1.4"/><polygon points="113.37,284.75 116.53,284.75 117.62,287.42 118.36,287.84 121.21,287.45 122.80,290.20 121.04,292.47 121.04,293.33 122.80,295.60 121.21,298.35 118.36,297.96 117.62,298.38 116.53,301.05 113.37,301.05 112.28,298.38 111.54,297.96 108.69,298.35 107.10,295.60 108.86,293.33 108.86,292.47 107.10,290.20 108.69,287.45 111.54,287.84 112.28,287.42" fill="none" stroke="#3a3a3a" stroke-width="1.4" stroke-linejoin="round"/><circle cx="114.95" cy="292.9" r="2.8" fill="none" stroke="#4ec3f0" stroke-width="1.6"/><text x="142.3" y="288.8" font-size="6" font-family="Liberation Sans" font-weight="bold" fill="#4ec3f0" text-anchor="middle">1</text><line x1="147.3" y1="286.6" x2="157.6" y2="286.6" stroke="#444" stroke-width="1.6"/><text x="142.3" y="295.5" font-size="6" font-family="Liberation Sans" font-weight="bold" fill="#4ec3f0" text-anchor="middle">2</text><line x1="147.3" y1="293.3" x2="157.6" y2="293.3" stroke="#444" stroke-width="1.6"/><text x="142.3" y="302.2" font-size="6" font-family="Liberation Sans" font-weight="bold" fill="#4ec3f0" text-anchor="middle">3</text><line x1="147.3" y1="300.0" x2="157.6" y2="300.0" stroke="#444" stroke-width="1.6"/><line x1="169.2" y1="285.6" x2="185.5" y2="285.6" stroke="#444" stroke-width="1.6"/><line x1="169.2" y1="290.2" x2="185.5" y2="290.2" stroke="#444" stroke-width="1.6"/><line x1="169.2" y1="294.6" x2="175.8" y2="294.6" stroke="#444" stroke-width="1.6"/><line x1="169.2" y1="299.4" x2="175.8" y2="299.4" stroke="#444" stroke-width="1.6"/><line x1="178.8" y1="296.9" x2="185.2" y2="296.9" stroke="#4ec3f0" stroke-width="1.5"/><line x1="182" y1="293.7" x2="182" y2="300.1" stroke="#4ec3f0" stroke-width="1.5"/><path d="M208.5 287.8 H205.5 Q203.8 287.8 203.8 289.5 V298.9 Q203.8 300.6 205.5 300.6 H214.6 Q216.3 300.6 216.3 298.9 V295.5" fill="none" stroke="#5a5a5a" stroke-width="1.6"/><path d="M211 293.3 L219 285.3 M213.6 285.1 H219.3 V290.8" fill="none" stroke="#4ec3f0" stroke-width="1.5"/><path d="M238.8 298.5 H236.8 V287.8 H247.5" fill="none" stroke="#222" stroke-width="1.5"/><path d="M244.8 284.8 L248 287.8 L244.8 290.8" fill="none" stroke="#222" stroke-width="1.5"/><path d="M249.8 287.8 H251.8 V298.5 H241.5" fill="none" stroke="#4ec3f0" stroke-width="1.5"/><path d="M244.3 295.5 L241.2 298.5 L244.3 301.5" fill="none" stroke="#4ec3f0" stroke-width="1.5"/></g></svg>
<div class="cb" style="left:802px;top:777px"></div>
<div class="t" style="left:819.5px;top:777px;">Только расхождения</div>
<div class="cb" style="left:954px;top:777px"></div>
<div class="t" style="left:972px;top:777px;">Товар с разными ценами (F10)</div>
<div class="a" style="left:1162px;top:772px;width:35px;height:23px;background:#fff;border:1px solid #cfcfcf;border-radius:4px"></div>
<div class="cb" style="left:1173px;top:777.5px"></div>
<svg class="a" style="left:1190px;top:789px" width="6" height="6"><polygon points="6,0 6,6 0,6" fill="#1f86c8"/></svg>
<div class="t" style="left:1202px;top:777px;">Изменения</div>
<div class="btn" style="left:810px;top:806px;width:51px;height:23px"></div>
<div class="btn" style="left:865px;top:806px;width:114px;height:23px"></div>
<div class="btn" style="left:984px;top:806px;width:109px;height:23px"></div>
<div class="btn" style="left:1097px;top:806px;width:68px;height:23px"></div>
<div class="btn" style="left:1170px;top:806px;width:100px;height:23px"></div>
<svg class="a" style="left:0;top:0;overflow:visible" width="1" height="1"><path d="M830.3 815.4 Q835 809.3 839.6 814.2" fill="none" stroke="#2a2a2a" stroke-width="1.8"/><polygon points="841.9,810.8 841.9,815.9 836.6,815.9" fill="#2a2a2a"/><path d="M840.7 819.6 Q836 825.7 831.4 820.8" fill="none" stroke="#4ec3f0" stroke-width="1.8"/><polygon points="829.1,824 829.1,818.9 834.4,818.9" fill="#4ec3f0"/><path d="M886 811.8 H893.5 L896.3 814.6 V822.3 Q896.3 823.4 895.2 823.4 H886 Q884.9 823.4 884.9 822.3 V812.9 Q884.9 811.8 886 811.8 Z" fill="none" stroke="#444" stroke-width="1.5"/><path d="M886.6 821 V818.3 H894.7 V821" fill="none" stroke="#4ec3f0" stroke-width="1.4"/><line x1="1002.2" y1="813.5" x2="1014.6" y2="813.5" stroke="#4ec3f0" stroke-width="1.5"/><path d="M1006.3 813.2 V811.8 H1010.7 V813.2" fill="none" stroke="#4ec3f0" stroke-width="1.3"/><path d="M1004.7 815.3 V821.7 Q1004.7 823.2 1006.2 823.2 H1011.1 Q1012.6 823.2 1012.6 821.7 V815.3" fill="none" stroke="#484848" stroke-width="1.5"/><path d="M1116.2 818.5 L1120.3 822.7 L1128.6 812.8" fill="none" stroke="#333" stroke-width="1.5"/><path d="M1189.6 812.3 L1199.6 822.3 M1199.6 812.3 L1189.6 822.3" fill="none" stroke="#333" stroke-width="1.5"/></svg>
<div class="t" style="left:900px;top:811px;">Сохранить</div>
<div class="t" style="left:1018.5px;top:811px;">Отменить</div>
<div class="t" style="left:1132px;top:811px;">OK</div>
<div class="t" style="left:1204px;top:811px;">Закрыть</div>
<div class="a" style="left:306px;top:52px;width:150px;height:27px;border:3px solid #ff4040"></div>
<div class="a" style="left:963px;top:25px;width:312px;height:271px;border:3px solid #ff4040"></div>
<div class="a" style="left:188px;top:328px;width:253px;height:285px;border:3px solid #ff4040"></div>
<div class="a" style="left:958px;top:335px;width:317px;height:243px;border:3px solid #ff4040"></div>
<div class="a" style="left:302px;top:772px;width:139px;height:25px;border:3px solid #ff4040"></div>
<svg class="a" style="left:0;top:0;overflow:visible" width="1" height="1"><line x1="451" y1="80" x2="946" y2="329.5" stroke="#ff4040" stroke-width="4.8" stroke-linecap="round"/><polygon points="957,335.3 947.4,321.8 940.7,335.6" fill="#ff4040"/><line x1="356" y1="768" x2="329.3" y2="644" stroke="#ff4040" stroke-width="4.8" stroke-linecap="round"/><polygon points="326.3,632 322.4,647.5 337,643.6" fill="#ff4040"/></svg></body></html>
